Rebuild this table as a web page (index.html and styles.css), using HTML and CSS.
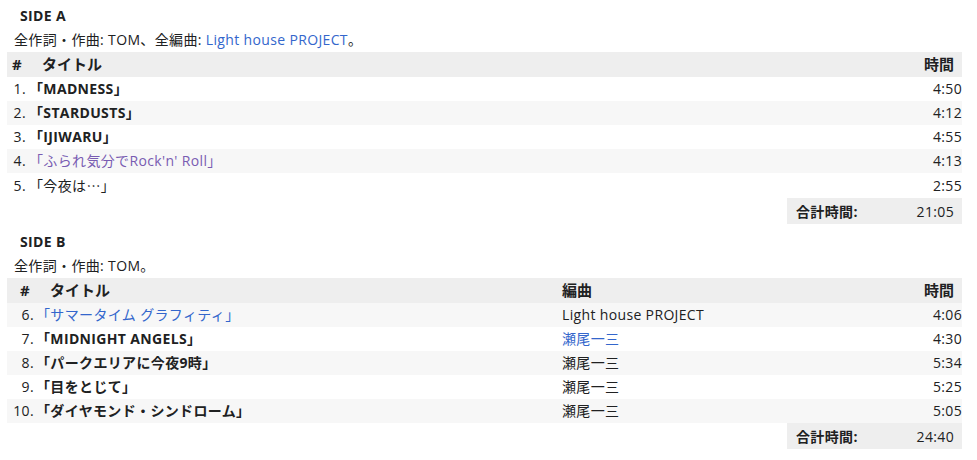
FILE: index.html
```html
<!DOCTYPE html>
<html lang="ja">
<head>
<meta charset="utf-8">
<link rel="stylesheet" href="styles.css">
</head>
<body>
<section class="side">
  <div class="side-title">SIDE A</div>
  <div class="credit">全作詞・作曲: TOM、全編曲: <a class="link">Light house PROJECT</a>。</div>
  <table class="tracks tracks-a">
    <colgroup><col class="c-num"><col><col class="c-time"></colgroup>
    <thead>
      <tr><th class="h-num">#</th><th class="h-title">タイトル</th><th class="h-time">時間</th></tr>
    </thead>
    <tbody>
      <tr><td class="num">1.</td><td class="title"><b>「MADNESS」</b></td><td class="time">4:50</td></tr>
      <tr class="alt"><td class="num">2.</td><td class="title"><b>「STARDUSTS」</b></td><td class="time">4:12</td></tr>
      <tr><td class="num">3.</td><td class="title"><b>「IJIWARU」</b></td><td class="time">4:55</td></tr>
      <tr class="alt"><td class="num">4.</td><td class="title"><a class="visited">「ふられ気分でRock'n' Roll」</a></td><td class="time">4:13</td></tr>
      <tr><td class="num">5.</td><td class="title">「今夜は<span class="cjk">…</span>」</td><td class="time">2:55</td></tr>
    </tbody>
  </table>
  <div class="total-row"><div class="total"><span class="total-label">合計時間:</span><span class="total-time">21:05</span></div></div>
</section>

<section class="side side-b">
  <div class="side-title">SIDE B</div>
  <div class="credit">全作詞・作曲: TOM。</div>
  <table class="tracks tracks-b">
    <colgroup><col class="c-num-b"><col><col class="c-arr"><col class="c-time"></colgroup>
    <thead>
      <tr><th class="h-num">#</th><th class="h-title">タイトル</th><th class="h-arr">編曲</th><th class="h-time">時間</th></tr>
    </thead>
    <tbody>
      <tr class="alt"><td class="num">6.</td><td class="title"><a class="link">「サマータイム グラフィティ」</a></td><td class="arr">Light house PROJECT</td><td class="time">4:06</td></tr>
      <tr><td class="num">7.</td><td class="title"><b>「MIDNIGHT ANGELS」</b></td><td class="arr"><a class="link">瀬尾一三</a></td><td class="time">4:30</td></tr>
      <tr class="alt"><td class="num">8.</td><td class="title"><b>「パークエリアに今夜9時」</b></td><td class="arr">瀬尾一三</td><td class="time">5:34</td></tr>
      <tr><td class="num">9.</td><td class="title"><b>「目をとじて」</b></td><td class="arr">瀬尾一三</td><td class="time">5:25</td></tr>
      <tr class="alt"><td class="num">10.</td><td class="title"><b>「ダイヤモンド・シンドローム」</b></td><td class="arr">瀬尾一三</td><td class="time">5:05</td></tr>
    </tbody>
  </table>
  <div class="total-row"><div class="total"><span class="total-label">合計時間:</span><span class="total-time">24:40</span></div></div>
</section>
</body>
</html>
```

FILE: styles.css
```css
html, body {
  margin: 0;
  padding: 0;
  background: #ffffff;
}
body {
  padding-top: 4px;
  font-family: "Open Sans", "Noto Sans CJK JP", sans-serif;
  font-size: 14px;
  letter-spacing: 0.35px;
  color: #202122;
}
.cjk {
  font-family: "Noto Sans CJK JP", sans-serif;
}
.side {
  width: 955px;
  margin-left: 7px;
}
.side-b {
  margin-top: 6px;
}
.side-title {
  font-weight: bold;
  line-height: 24px;
  padding-left: 13px;
}
.credit {
  line-height: 24px;
  padding-left: 7px;
}
.link {
  color: #3366cc;
  text-decoration: none;
}
.visited {
  color: #795cb2;
  text-decoration: none;
}
.tracks {
  width: 955px;
  border-collapse: collapse;
  table-layout: fixed;
}
.c-num { width: 22px; }
.c-num-b { width: 29px; }
.c-time { width: 60px; }
.c-arr { width: 340px; }
.tracks th, .tracks td {
  padding: 0;
  height: 24px;
  line-height: 24px;
  white-space: nowrap;
}
.tracks th {
  height: 25px;
  line-height: 25px;
}
.tracks thead tr {
  background: #eeeeee;
}
.tracks th {
  font-weight: bold;
  font-size: 15px;
  letter-spacing: 0;
  text-align: left;
}
.tracks-a .h-num { padding-left: 5px; }
.tracks-a .h-title { padding-left: 13px; }
.tracks-b .h-num { padding-left: 13px; }
.tracks-b .h-title { padding-left: 14px; }
.h-arr { padding-left: 0; }
.tracks .h-time {
  text-align: right;
  padding-right: 8px;
}
.tracks tr.alt {
  background: #f7f7f7;
}
.num {
  text-align: right;
}
.tracks-a .num { padding-right: 3px; }
.tracks-b .num { padding-right: 2px; }
.title {
  padding-left: 0;
}
.title b { font-weight: bold; }
.arr {
  padding-left: 0;
}
.time {
  text-align: right;
  padding-right: 8px;
}
.total-row {
  display: flex;
  justify-content: flex-end;
}
.total {
  width: 175px;
  height: 26px;
  background: #eeeeee;
  display: flex;
  align-items: center;
  justify-content: space-between;
  padding: 0 8px 0 9px;
  box-sizing: border-box;
}
.total-label {
  font-weight: bold;
}
```
